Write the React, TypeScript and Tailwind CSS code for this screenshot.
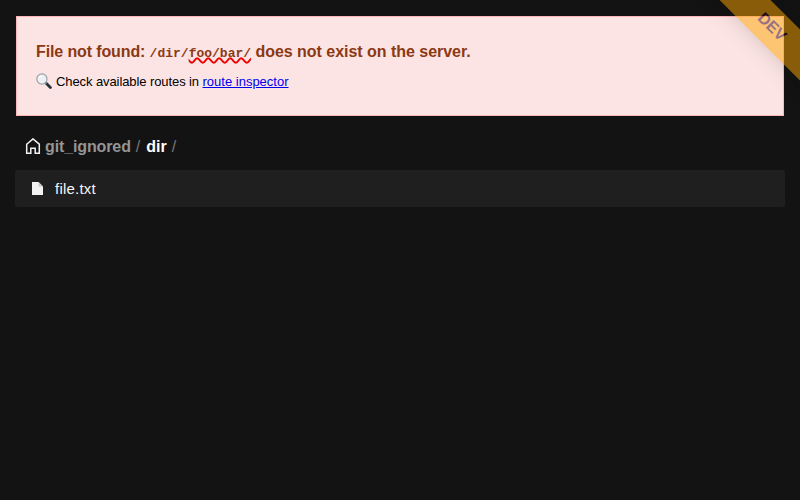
import React from "react";

function Magnifier() {
  return (
    <svg className="relative -top-px h-4 w-4 shrink-0" viewBox="0 0 16 16" fill="none">
      <path d="M10.2 10.2L14.4 14.4" stroke="#253039" strokeWidth="2.8" strokeLinecap="round" />
      <path d="M9 9L10.6 10.6" stroke="#8b9499" strokeWidth="1.6" />
      <circle cx="5.9" cy="6" r="5.1" fill="#eef0f2" stroke="#9ba1a5" strokeWidth="1.2" />
      <path d="M3.3 5.2A3.4 3.4 0 0 1 6 3" stroke="#fff" strokeWidth="1.2" />
    </svg>
  );
}

function Home() {
  return (
    <svg className="relative -top-px h-4 w-4 shrink-0" viewBox="0 0 16 16" fill="none" stroke="#f2f2f2" strokeWidth="1.5">
      <path d="M1.7 6.2L8 0.9L14.3 6.2V15.2H10.2V10.2H5.8V15.2H1.7Z" />
    </svg>
  );
}

function FileIcon() {
  return (
    <svg className="h-[13px] w-[11px] shrink-0" viewBox="0 0 11 13">
      <path d="M0 0H6.5L11 4.5V13H0Z" fill="#f2f2f2" />
      <path d="M6.5 0L11 4.5H6.5Z" fill="#c9c9c9" />
    </svg>
  );
}

export default function App() {
  return (
    <div className="relative h-[500px] w-[800px] overflow-hidden bg-[#131313] p-4 font-['Liberation_Sans',Arial,sans-serif]">
      <section className="h-[100px] border border-[#ffb6b6] bg-[#fce4e4] px-[19px] pt-[25px]">
        <h1 className="h-5 whitespace-nowrap text-[16px] leading-5 font-bold text-[#8b3913]">
          <span className="tracking-[-0.12px]">File not found: </span>
          <code className="font-['Liberation_Mono',monospace] text-[13px]">
            /dir/
            <span className="underline decoration-[#f00000] decoration-wavy decoration-[1.5px] underline-offset-[0px]">foo/bar/</span>
          </code>
          <span className="tracking-[-0.03px]"> does not exist on the server.</span>
        </h1>
        <p className="mt-[10px] flex h-5 items-center gap-1 text-[13px] leading-5 text-black">
          <Magnifier />
          <span className="tracking-[-0.09px]">
            Check available routes in{" "}
            <a className="tracking-normal text-[#0000ee] underline" href="#">route inspector</a>
          </span>
        </p>
      </section>
      <nav className="mt-[21px] ml-[9px] flex h-5 items-center text-[16px] leading-5 font-bold text-[#959595]">
        <Home />
        <span className="ml-1 tracking-[-0.12px]">git_ignored</span>
        <span className="ml-[5px] font-normal text-[#777]">/</span>
        <span className="ml-[6px] text-white">dir</span>
        <span className="ml-[5px] font-normal text-[#777]">/</span>
      </nav>
      <div className="-mx-px mt-[13px] flex h-[37px] items-center rounded-[2px] bg-[#1f1f1f] pl-[17px] text-[15px] tracking-[0.22px] text-[#f5f5f5]">
        <FileIcon />
        <span className="ml-3 pt-[2px]">file.txt</span>
      </div>
      <div className="absolute top-[9px] left-[672px] flex h-[36px] w-[200px] rotate-45 items-center justify-center bg-[#ffa500] text-[16px] font-bold text-[#300028] opacity-50 shadow-[0_0_20px_rgba(0,0,0,0.3)]">
        DEV
      </div>
    </div>
  );
}
